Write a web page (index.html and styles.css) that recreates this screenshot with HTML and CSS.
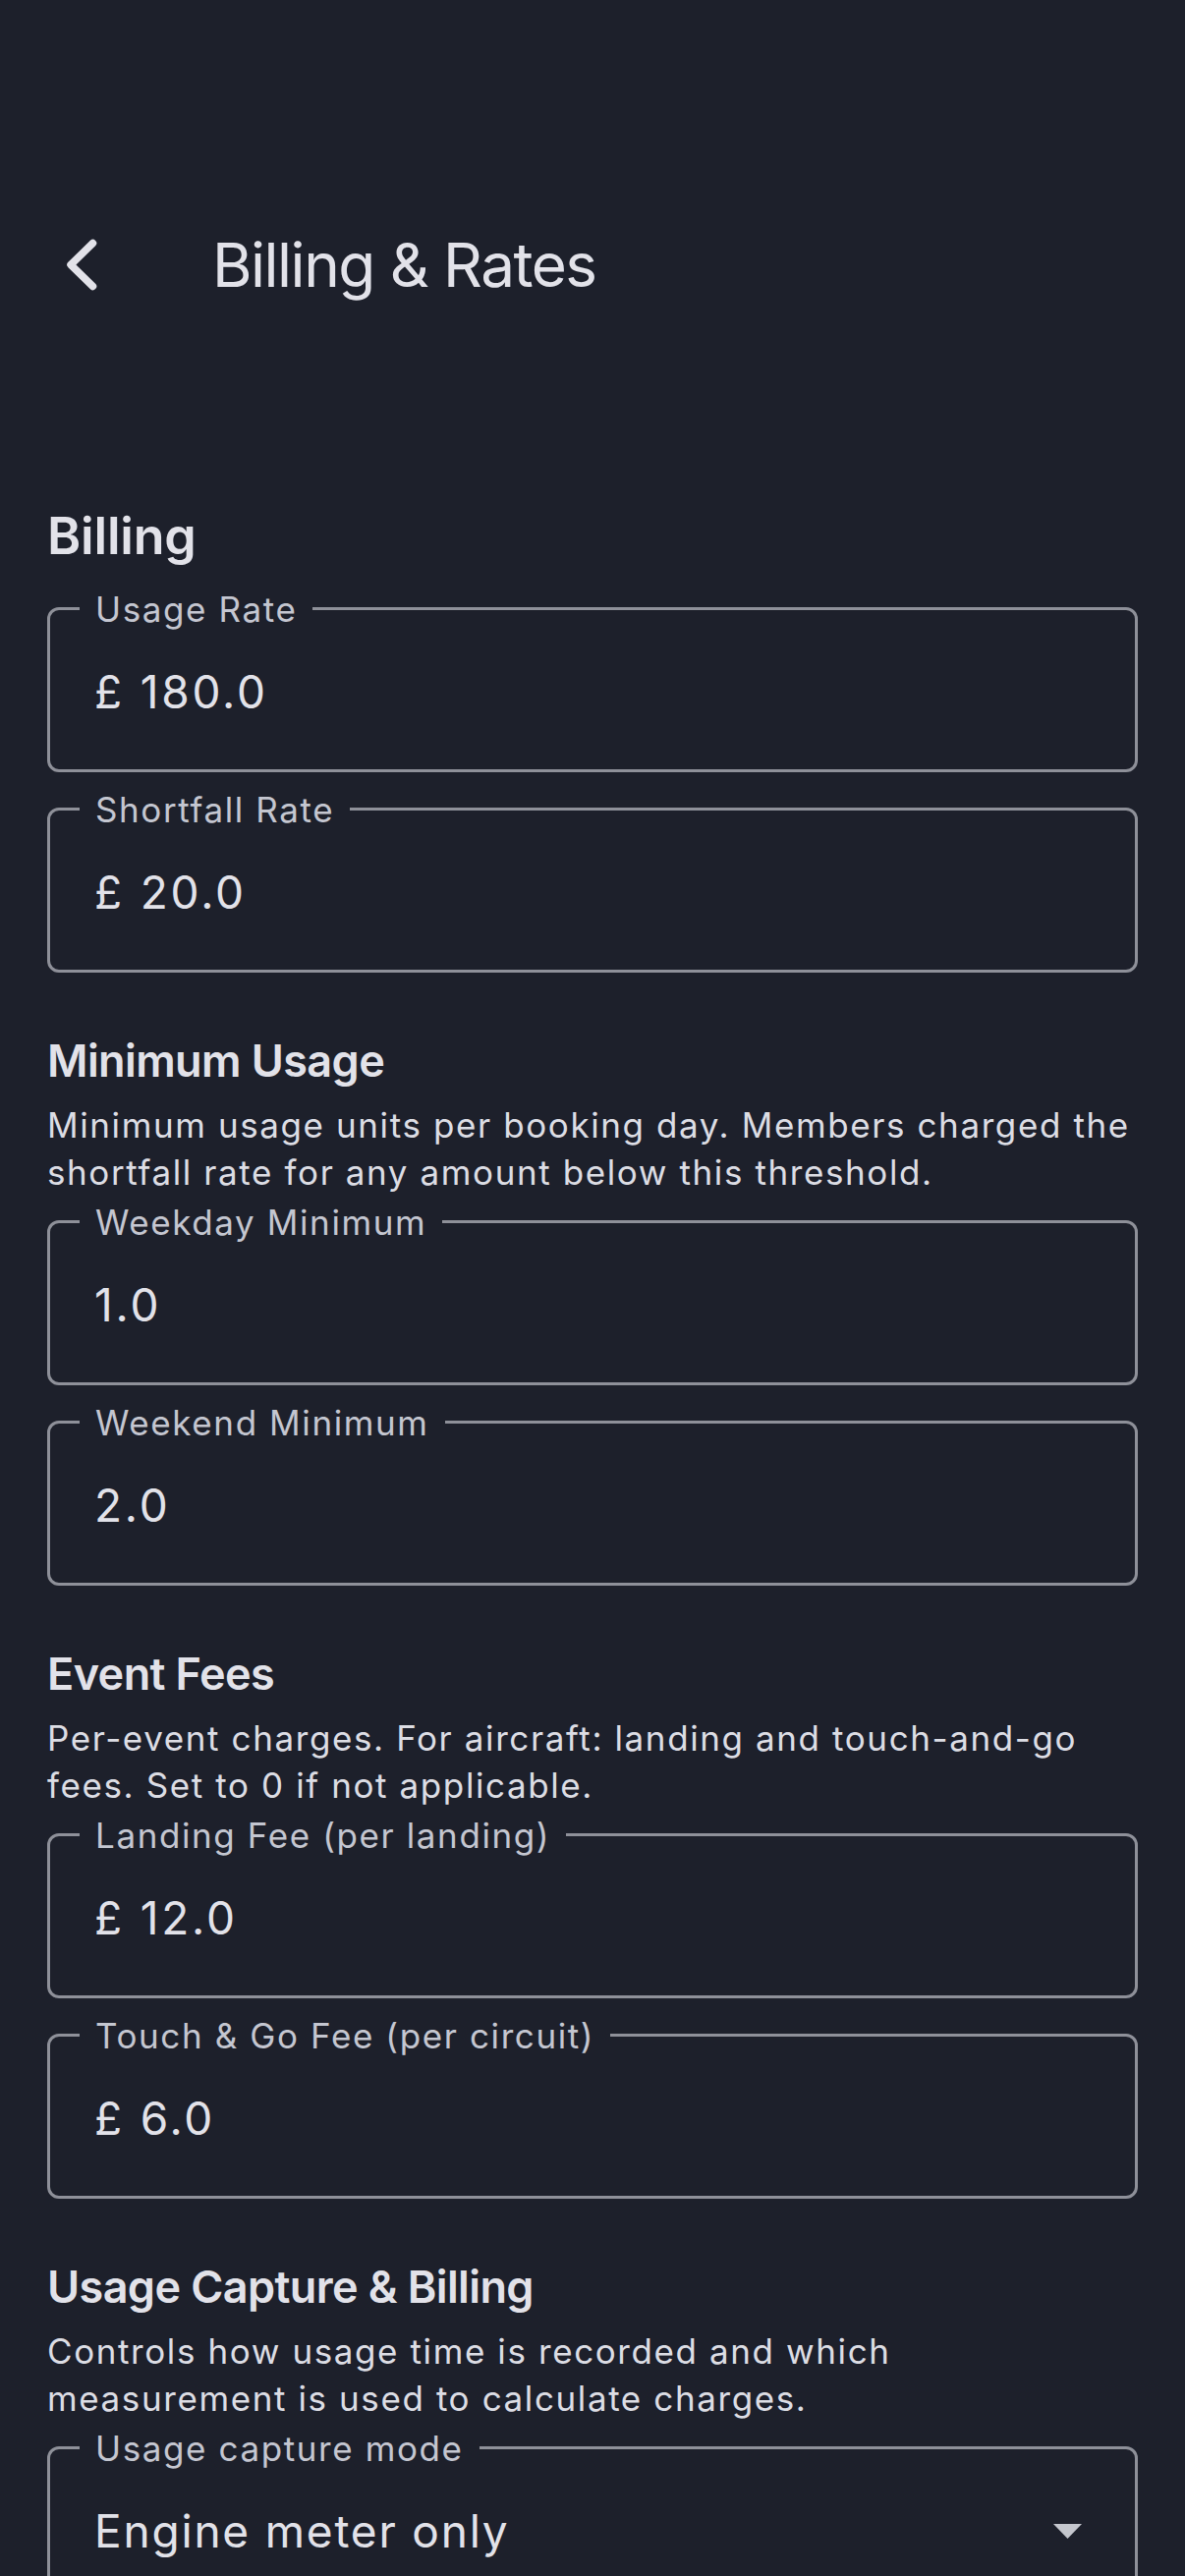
FILE: index.html
```html
<!DOCTYPE html>
<html lang="en">
<head>
<meta charset="utf-8">
<title>Billing &amp; Rates</title>
<link rel="stylesheet" href="styles.css">
</head>
<body>
<div class="screen">
  <div class="status-bar"></div>
  <header class="app-bar">
    <button class="back" aria-label="Back">
      <svg width="168" height="168" viewBox="0 0 168 168"><polyline points="94.5,61.5 72,83.5 94.5,105.5" fill="none" stroke="#e2e2e9" stroke-width="7.5" stroke-linecap="round" stroke-linejoin="round"/></svg>
    </button>
    <h1 class="title">Billing &amp; Rates</h1>
  </header>

  <main class="content">
    <h2 class="section-title first">Billing</h2>
    <div class="field gap-after-title">
      <span class="field-label">Usage Rate</span>
      <span class="field-value">£ 180.0</span>
    </div>
    <div class="field">
      <span class="field-label">Shortfall Rate</span>
      <span class="field-value">£ 20.0</span>
    </div>

    <h2 class="section-title">Minimum Usage</h2>
    <p class="section-desc">Minimum usage units per booking day. Members charged the<br>shortfall rate for any amount below this threshold.</p>
    <div class="field gap-after-desc">
      <span class="field-label">Weekday Minimum</span>
      <span class="field-value">1.0</span>
    </div>
    <div class="field">
      <span class="field-label">Weekend Minimum</span>
      <span class="field-value">2.0</span>
    </div>

    <h2 class="section-title">Event Fees</h2>
    <p class="section-desc">Per-event charges. For aircraft: landing and touch-and-go<br>fees. Set to 0 if not applicable.</p>
    <div class="field gap-after-desc">
      <span class="field-label">Landing Fee (per landing)</span>
      <span class="field-value">£ 12.0</span>
    </div>
    <div class="field">
      <span class="field-label">Touch &amp; Go Fee (per circuit)</span>
      <span class="field-value">£ 6.0</span>
    </div>

    <h2 class="section-title">Usage Capture &amp; Billing</h2>
    <p class="section-desc">Controls how usage time is recorded and which<br>measurement is used to calculate charges.</p>
    <div class="field dropdown gap-after-desc">
      <span class="field-label">Usage capture mode</span>
      <span class="field-value select-value">Engine meter only</span>
      <svg class="drop-arrow" width="29" height="15" viewBox="0 0 29 15"><polygon points="0,0 29,0 14.5,15" fill="#c4c6cd"/></svg>
    </div>
  </main>
</div>
</body>
</html>
```
FILE: styles.css
```css
html, body {
  margin: 0;
  padding: 0;
  background: #1d202b;
  width: 1206px;
  height: 2622px;
  overflow: hidden;
}

.screen {
  width: 1206px;
  height: 2622px;
  overflow: hidden;
  font-family: Inter, "Noto Sans", sans-serif;
  color: #e2e2e9;
}

.status-bar {
  height: 186px;
}

.app-bar {
  height: 168px;
  display: flex;
  align-items: center;
}

.back {
  width: 168px;
  height: 168px;
  padding: 0;
  margin: 0;
  border: 0;
  background: none;
  display: block;
  flex: none;
}

.back svg {
  display: block;
}

.title {
  margin: 0 0 0 48px;
  font-size: 62px;
  font-weight: 400;
  letter-spacing: -1.5px;
  color: #e2e2e9;
  line-height: 76px;
}

.content {
  padding: 0 48px;
}

.section-title {
  margin: 62px 0 0;
  font-size: 45px;
  line-height: 56px;
  font-weight: 600;
  letter-spacing: -0.6px;
  color: #e2e2e9;
}

.section-title.first {
  margin-top: 164px;
  font-size: 52px;
  letter-spacing: -0.2px;
}

.section-desc {
  margin: 13px 0 0;
  font-size: 35px;
  line-height: 48px;
  letter-spacing: 1.6px;
  color: #dcdde4;
  white-space: nowrap;
}

.field {
  position: relative;
  box-sizing: border-box;
  height: 168px;
  margin-top: 36px;
  border: 3px solid #8e9099;
  border-radius: 12px;
  display: flex;
  align-items: center;
  padding: 4px 0 0 45px;
}

.field.gap-after-title {
  margin-top: 44px;
}

.field.gap-after-desc {
  margin-top: 25px;
}

.field-label {
  position: absolute;
  top: -22.5px;
  left: 30px;
  padding: 0 16px;
  background: #1d202b;
  font-size: 35px;
  line-height: 42px;
  letter-spacing: 1.6px;
  color: #c4c6d0;
  white-space: nowrap;
}

.field-value {
  font-size: 46px;
  line-height: 56px;
  letter-spacing: 2.8px;
  color: #e2e2e9;
  white-space: nowrap;
}

.dropdown {
  justify-content: space-between;
  padding-right: 54px;
}

.select-value {
  letter-spacing: 1.8px;
}

.drop-arrow {
  display: block;
  flex: none;
}
```
